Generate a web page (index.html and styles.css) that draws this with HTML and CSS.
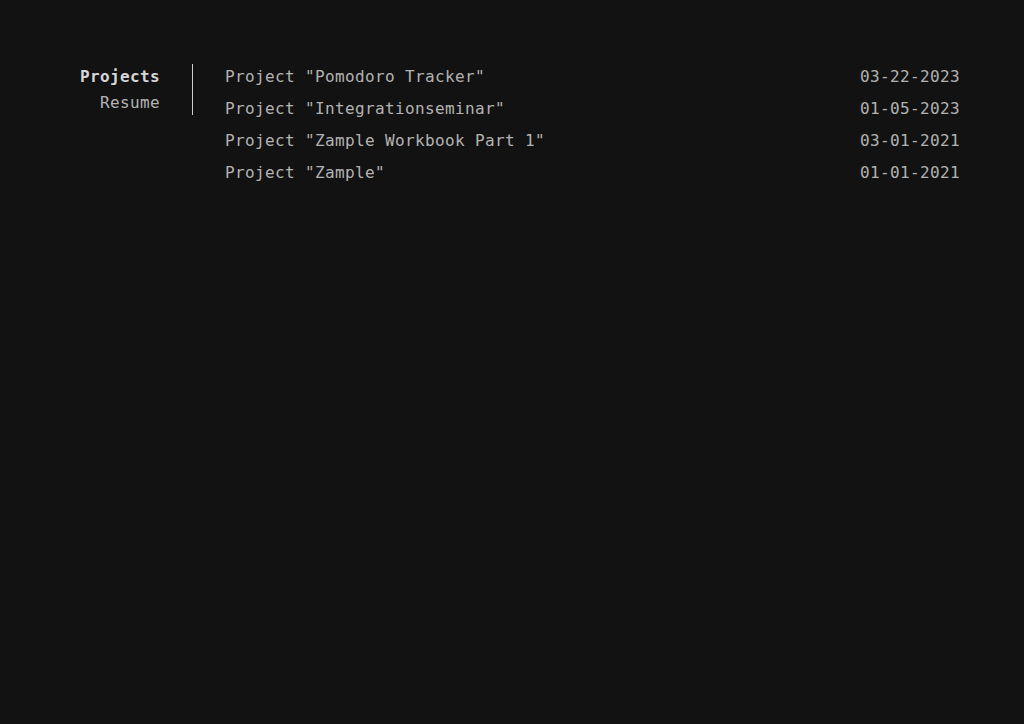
FILE: index.html
```html
<!DOCTYPE html>
<html lang="en">
<head>
<meta charset="utf-8">
<title>Projects</title>
<link rel="stylesheet" href="styles.css">
</head>
<body>
<div class="page">
  <nav class="nav">
    <a class="nav-item active" href="#">Projects</a>
    <a class="nav-item" href="#">Resume</a>
  </nav>
  <ul class="list">
    <li class="row"><span class="title">Project "Pomodoro Tracker"</span><span class="date">03-22-2023</span></li>
    <li class="row"><span class="title">Project "Integrationseminar"</span><span class="date">01-05-2023</span></li>
    <li class="row"><span class="title">Project "Zample Workbook Part 1"</span><span class="date">03-01-2021</span></li>
    <li class="row"><span class="title">Project "Zample"</span><span class="date">01-01-2021</span></li>
  </ul>
</div>
</body>
</html>
```
FILE: styles.css
```css
html, body {
  margin: 0;
  padding: 0;
  background: #121212;
  height: 100%;
}
body {
  font-family: "DejaVu Sans Mono", "Liberation Mono", monospace;
  font-size: 16px;
  letter-spacing: 0.37px;
  color: #b3b3b3;
}
.page {
  display: flex;
  align-items: flex-start;
  padding: 61px 64px 0 80px;
}
.nav {
  display: flex;
  flex-direction: column;
  align-items: flex-end;
  width: 80px;
  padding-right: 32px;
  margin-top: 3px;
  border-right: 1px solid #cfcfcf;
}
.nav-item {
  display: block;
  line-height: 25.5px;
  color: #b3b3b3;
  text-decoration: none;
  white-space: nowrap;
}
.nav-item.active {
  color: #d6d6d6;
  font-weight: bold;
}
.list {
  flex: 1;
  list-style: none;
  margin: 0;
  padding: 0 0 0 32px;
}
.row {
  display: flex;
  justify-content: space-between;
  line-height: 32px;
  white-space: nowrap;
}
```
